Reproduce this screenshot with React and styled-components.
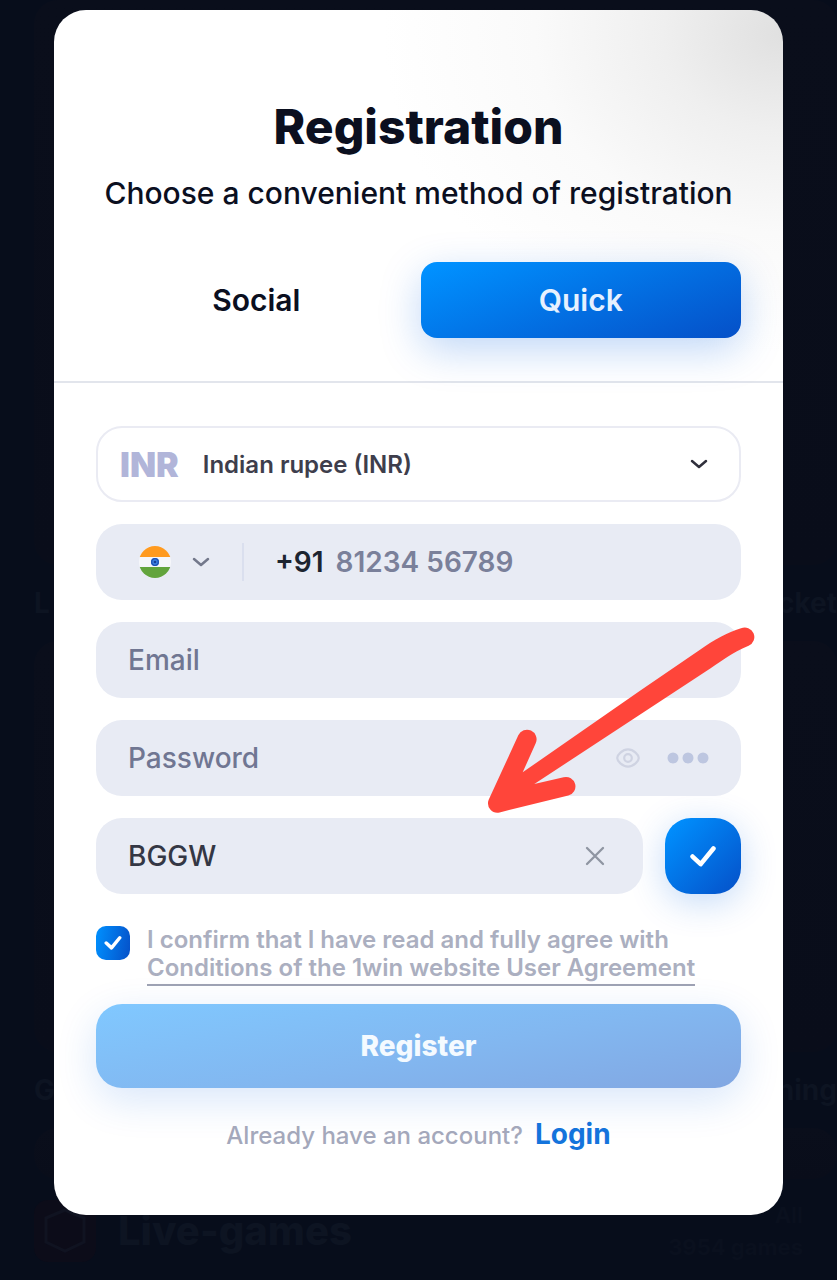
import React, { useState } from "react";
import styled, { createGlobalStyle } from "styled-components";

const GlobalStyle = createGlobalStyle`
  *, *::before, *::after { box-sizing: border-box; }
  body {
    margin: 0;
    background: #070d1b;
    color: #0b0f1f;
    font-family: Inter, "Liberation Sans", sans-serif;
  }
  button, input, select { font-family: inherit; }
`;

const Stage = styled.div`
  display: grid;
  grid-template-columns: minmax(0, 1fr);
  min-height: 100vh;
  overflow: hidden;
`;

const Backdrop = styled.div`
  grid-area: 1 / 1;
  display: flex;
  flex-direction: column;
  padding: 0 0 18px 34px;
  color: #0d1422;
  font-weight: 700;
  font-size: 28px;
  line-height: 36px;
`;

const BackdropPanel = styled.div`
  flex: ${(p) => p.$grow} 0 0;
  margin-bottom: 20px;
  border-radius: 24px;
  background: linear-gradient(180deg, #0a0e1b, #090d1a);
`;

const BackdropRow = styled.div`
  display: flex;
  justify-content: space-between;
  margin-bottom: 20px;
`;

const BackdropFooter = styled.div`
  display: flex;
  align-items: center;
  gap: 22px;
  padding-right: 34px;
`;

const BackdropIcon = styled.svg`
  width: 62px;
  height: 62px;
  border-radius: 14px;
  background: #0c0c19;
`;

const BackdropTitle = styled.span`
  flex: 1;
  font-size: 40px;
  font-weight: 800;
`;

const BackdropCount = styled.span`
  display: flex;
  flex-direction: column;
  align-items: flex-end;
  font-size: 22px;
  line-height: 32px;
  color: #0a101e;
`;

const Modal = styled.main`
  grid-area: 1 / 1;
  position: relative;
  align-self: start;
  margin: 10px 54px 66px;
  border-radius: 32px;
  background:
    radial-gradient(ellipse 400px 320px at 100% 24px, #e0e0e0 0%, #efefef 30%, #fafafa 62%, #fff 100%) top / 100% 371px no-repeat,
    #fff;
`;

const Header = styled.header`
  padding: 87px 42px 43px;
  border-bottom: 2px solid #e2e5ec;
  text-align: center;
`;

const Title = styled.h1`
  margin: 0;
  font-size: 48px;
  line-height: 60px;
  font-weight: 800;
`;

const Subtitle = styled.p`
  margin: 18px -20px 51px;
  font-size: 30px;
  line-height: 36px;
  font-weight: 500;
`;

const Tabs = styled.div`
  display: grid;
  grid-template-columns: 1fr 1fr;
  gap: 4px;
`;

const blue = "linear-gradient(160deg, #0091ff 4%, #0550c8 100%)";

const Tab = styled.button`
  height: 76px;
  border: 0;
  border-radius: 16px;
  font-size: 30px;
  font-weight: 600;
  color: ${(p) => (p.$active ? "#e6f1ff" : "#0b0f1f")};
  background: ${(p) => (p.$active ? blue : "transparent")};
  box-shadow: ${(p) => (p.$active ? "0 12px 40px rgba(10, 100, 225, 0.26)" : "none")};
`;

const Form = styled.form`
  display: flex;
  flex-direction: column;
  gap: 22px;
  padding: 43px 42px 62px;
`;

const Field = styled.div`
  position: relative;
  display: flex;
  align-items: center;
  flex: 1 1 auto;
  min-width: 0;
  height: 76px;
  padding: 0 32px;
  border-radius: 26px;
  background: #e8ebf4;
`;

const CurrencyField = styled(Field)`
  padding: 0 0 0 22px;
  border: 2px solid #eaebf3;
  background: #fff;
`;

const CurrencyCode = styled.label`
  font-size: 34px;
  font-weight: 900;
  color: #b1b5d9;
`;

const CurrencySelect = styled.select`
  flex: 1;
  align-self: stretch;
  min-width: 0;
  padding: 0 72px 0 24px;
  border: 0;
  background: transparent;
  appearance: none;
  font-size: 24px;
  font-weight: 600;
  color: #3e3e4c;
`;

const SelectChevron = styled.svg`
  position: absolute;
  right: 31px;
  width: 18px;
  height: 10px;
  pointer-events: none;
`;

const CountryPicker = styled.div`
  position: relative;
  display: flex;
  align-items: center;
  gap: 21px;
  height: 38px;
  padding: 0 32px 0 11px;
  margin-right: 31px;
  border-right: 2px solid #dadfee;
`;

const CountrySelect = styled.select`
  position: absolute;
  inset: 0;
  width: 100%;
  opacity: 0;
`;

const DialCode = styled.label`
  margin-right: 12px;
  font-size: 28px;
  font-weight: 600;
  color: #1c2430;
`;

const TextInput = styled.input`
  flex: 1;
  min-width: 0;
  width: 100%;
  height: 44px;
  padding: 0;
  border: 0;
  outline: 0;
  background: transparent;
  font-size: 28px;
  font-weight: 500;
  color: #343744;
  &::placeholder { color: #707692; opacity: 1; }
`;

const PhoneInput = styled(TextInput)`
  font-weight: 600;
  &::placeholder { color: #7a809a; }
`;

const IconButton = styled.button`
  display: flex;
  padding: 0;
  border: 0;
  background: transparent;
`;

const PasswordTools = styled.div`
  display: flex;
  align-items: center;
  gap: 27px;
`;

const PromoRow = styled.div`
  display: flex;
  gap: 22px;
`;

const ApplyButton = styled.button`
  display: flex;
  align-items: center;
  justify-content: center;
  flex: none;
  width: 76px;
  height: 76px;
  padding: 0;
  border: 0;
  border-radius: 26px;
  background: linear-gradient(135deg, #0091ff 5%, #0550c8 100%);
  box-shadow: 0 8px 36px rgba(10, 100, 225, 0.24);
`;

const Consent = styled.div`
  display: flex;
  align-items: flex-start;
  gap: 17px;
  margin: 10px 0 -4px;
  font-size: 24px;
  line-height: 28px;
  font-weight: 600;
  color: #abafc0;
`;

const CheckWrap = styled.span`
  position: relative;
  display: flex;
  flex: none;
  width: 34px;
  height: 34px;
`;

const Checkbox = styled.input`
  width: 34px;
  height: 34px;
  margin: 0;
  appearance: none;
  border-radius: 10px;
  background: #e8ebf4;
  &:checked { background: linear-gradient(100deg, #0091ff, #0550c8); }
`;

const CheckMark = styled.svg`
  position: absolute;
  left: 8px;
  top: 9px;
  width: 18px;
  height: 16px;
  pointer-events: none;
`;

const ConsentText = styled.div`
  display: flex;
  flex-direction: column;
  align-items: flex-start;
`;

const AgreementLink = styled.a`
  padding-bottom: 2px;
  border-bottom: 2px solid #9fa3b4;
  color: inherit;
  text-decoration: none;
`;

const SubmitButton = styled.button`
  height: 84px;
  border: 0;
  border-radius: 26px;
  background: linear-gradient(170deg, #80c8ff 0%, #82b7f0 55%, #82a7e2 100%);
  box-shadow: 0 12px 40px rgba(10, 100, 225, 0.16);
  font-size: 28px;
  font-weight: 800;
  color: #f4faff;
`;

const LoginLine = styled.p`
  display: flex;
  align-items: baseline;
  justify-content: center;
  gap: 12px;
  margin: 7px 0 0;
  font-size: 24px;
  line-height: 34px;
  font-weight: 500;
  color: #a4a8bb;
`;

const LoginLink = styled.a`
  font-size: 28px;
  font-weight: 700;
  color: #1474dc;
  text-decoration: none;
`;

const Arrow = styled.svg`
  position: absolute;
  left: 433px;
  top: 616px;
  width: 268px;
  height: 188px;
  pointer-events: none;
`;

const Chevron = () => (
  <path d="M2 2 L9 8 L16 2" fill="none" stroke="currentColor" strokeWidth="2.5" strokeLinecap="round" strokeLinejoin="round" />
);

const Tick = ({ width }) => (
  <path d="M2 9 L9 15.5 L20 2" fill="none" stroke="#fff" strokeWidth={width} strokeLinecap="round" strokeLinejoin="round" />
);

const IndiaFlag = () => (
  <svg width="32" height="32" viewBox="0 0 32 32" aria-hidden="true">
    <clipPath id="flagClip"><circle cx="16" cy="16" r="16" /></clipPath>
    <g clipPath="url(#flagClip)">
      <rect width="32" height="32" fill="#f5f6fa" />
      <rect width="32" height="11" fill="#ff9a1f" />
      <rect y="21" width="32" height="11" fill="#62a43c" />
    </g>
    <circle cx="16" cy="16" r="4" fill="#3d7fe0" />
    <circle cx="16" cy="16" r="3.3" fill="none" stroke="#1c50b4" strokeWidth="1.3" />
    <circle cx="16" cy="16" r="1.3" fill="#173f98" />
  </svg>
);

export default function App() {
  const [agree, setAgree] = useState(true);
  const [promo, setPromo] = useState("BGGW");
  const [visible, setVisible] = useState(false);

  return (
    <>
      <GlobalStyle />
      <Stage>
        <Backdrop aria-hidden="true">
          <BackdropPanel $grow={55} />
          <BackdropRow><span>L</span><span>cket</span></BackdropRow>
          <BackdropPanel $grow={40} />
          <BackdropRow><span>G</span><span>ning</span></BackdropRow>
          <BackdropPanel $grow={5} />
          <BackdropFooter>
            <BackdropIcon viewBox="0 0 62 62">
              <path d="M12 18 L31 10 L50 18 V42 L31 51 L12 42 Z" fill="none" stroke="#101321" strokeWidth="3" />
            </BackdropIcon>
            <BackdropTitle>Live-games</BackdropTitle>
            <BackdropCount><span>All</span><span>3954 games</span></BackdropCount>
          </BackdropFooter>
        </Backdrop>

        <Modal>
          <Header>
            <Title>Registration</Title>
            <Subtitle>Choose a convenient method of registration</Subtitle>
            <Tabs>
              <Tab type="button">Social</Tab>
              <Tab type="button" $active>Quick</Tab>
            </Tabs>
          </Header>

          <Form onSubmit={(e) => e.preventDefault()}>
            <CurrencyField>
              <CurrencyCode htmlFor="currency">INR</CurrencyCode>
              <CurrencySelect id="currency" defaultValue="inr">
                <option value="inr">Indian rupee (INR)</option>
              </CurrencySelect>
              <SelectChevron viewBox="0 0 18 10" color="#30303c"><Chevron /></SelectChevron>
            </CurrencyField>

            <Field>
              <CountryPicker>
                <IndiaFlag />
                <svg width="18" height="10" viewBox="0 0 18 10" color="#73788b"><Chevron /></svg>
                <CountrySelect aria-label="Country" defaultValue="in">
                  <option value="in">India</option>
                </CountrySelect>
              </CountryPicker>
              <DialCode htmlFor="phone">+91</DialCode>
              <PhoneInput id="phone" type="tel" placeholder="81234 56789" />
            </Field>

            <Field>
              <TextInput type="email" aria-label="Email" placeholder="Email" />
            </Field>

            <Field>
              <TextInput type={visible ? "text" : "password"} aria-label="Password" placeholder="Password" />
              <PasswordTools>
                <IconButton type="button" aria-label="Show password" onClick={() => setVisible(!visible)}>
                  <svg width="24" height="20" viewBox="0 0 24 20" fill="none" stroke="#cfd3e2" strokeWidth="2.2">
                    <path d="M1.2 10 C1.2 7 6.2 1.4 12 1.4 C17.8 1.4 22.8 7 22.8 10 C22.8 13 17.8 18.6 12 18.6 C6.2 18.6 1.2 13 1.2 10 Z" />
                    <circle cx="12" cy="10" r="3.8" />
                  </svg>
                </IconButton>
                <IconButton type="button" aria-label="Password options">
                  <svg width="42" height="12" viewBox="0 0 42 12" fill="#bdc6e0">
                    <circle cx="6" cy="6" r="5.5" />
                    <circle cx="21" cy="6" r="5.5" />
                    <circle cx="36" cy="6" r="5.5" />
                  </svg>
                </IconButton>
              </PasswordTools>
            </Field>

            <PromoRow>
              <Field>
                <TextInput aria-label="Promo code" value={promo} onChange={(e) => setPromo(e.target.value)} />
                <IconButton type="button" aria-label="Clear promo code" onClick={() => setPromo("")}>
                  <svg width="32" height="20" viewBox="0 0 32 20" fill="none" stroke="#8f95a2" strokeWidth="2.3" strokeLinecap="round">
                    <path d="M8 2 L24 18 M24 2 L8 18" />
                  </svg>
                </IconButton>
              </Field>
              <ApplyButton type="button" aria-label="Apply promo code">
                <svg width="28" height="22" viewBox="-1 -1 24 19"><Tick width="4" /></svg>
              </ApplyButton>
            </PromoRow>

            <Consent>
              <CheckWrap>
                <Checkbox id="agree" type="checkbox" checked={agree} onChange={(e) => setAgree(e.target.checked)} />
                {agree && <CheckMark viewBox="-1 -1 24 20"><Tick width="4.6" /></CheckMark>}
              </CheckWrap>
              <ConsentText>
                <label htmlFor="agree">I confirm that I have read and fully agree with</label>
                <AgreementLink href="#agreement">Conditions of the 1win website User Agreement</AgreementLink>
              </ConsentText>
            </Consent>

            <SubmitButton type="submit">Register</SubmitButton>

            <LoginLine>
              <span>Already have an account?</span>
              <LoginLink href="#login">Login</LoginLink>
            </LoginLine>
          </Form>

          <Arrow viewBox="0 0 268 188" aria-hidden="true" fill="#ff453a">
            <path d="M254 2.3 C240 6.5 228 13.5 213 23.7 L153 64.7 L35.7 146.3 L48.7 117.3 A9.4 9.4 0 0 0 31.3 109.3 L1.7 173.8 A9.4 9.4 0 0 0 12.6 186.4 L81.3 169.6 A9.4 9.4 0 0 0 76.6 151.2 L47.3 158 L224 42 C236 34 244 27.5 261.6 19.8 A9.4 9.4 0 0 0 254 2.3 Z" />
          </Arrow>
        </Modal>
      </Stage>
    </>
  );
}
